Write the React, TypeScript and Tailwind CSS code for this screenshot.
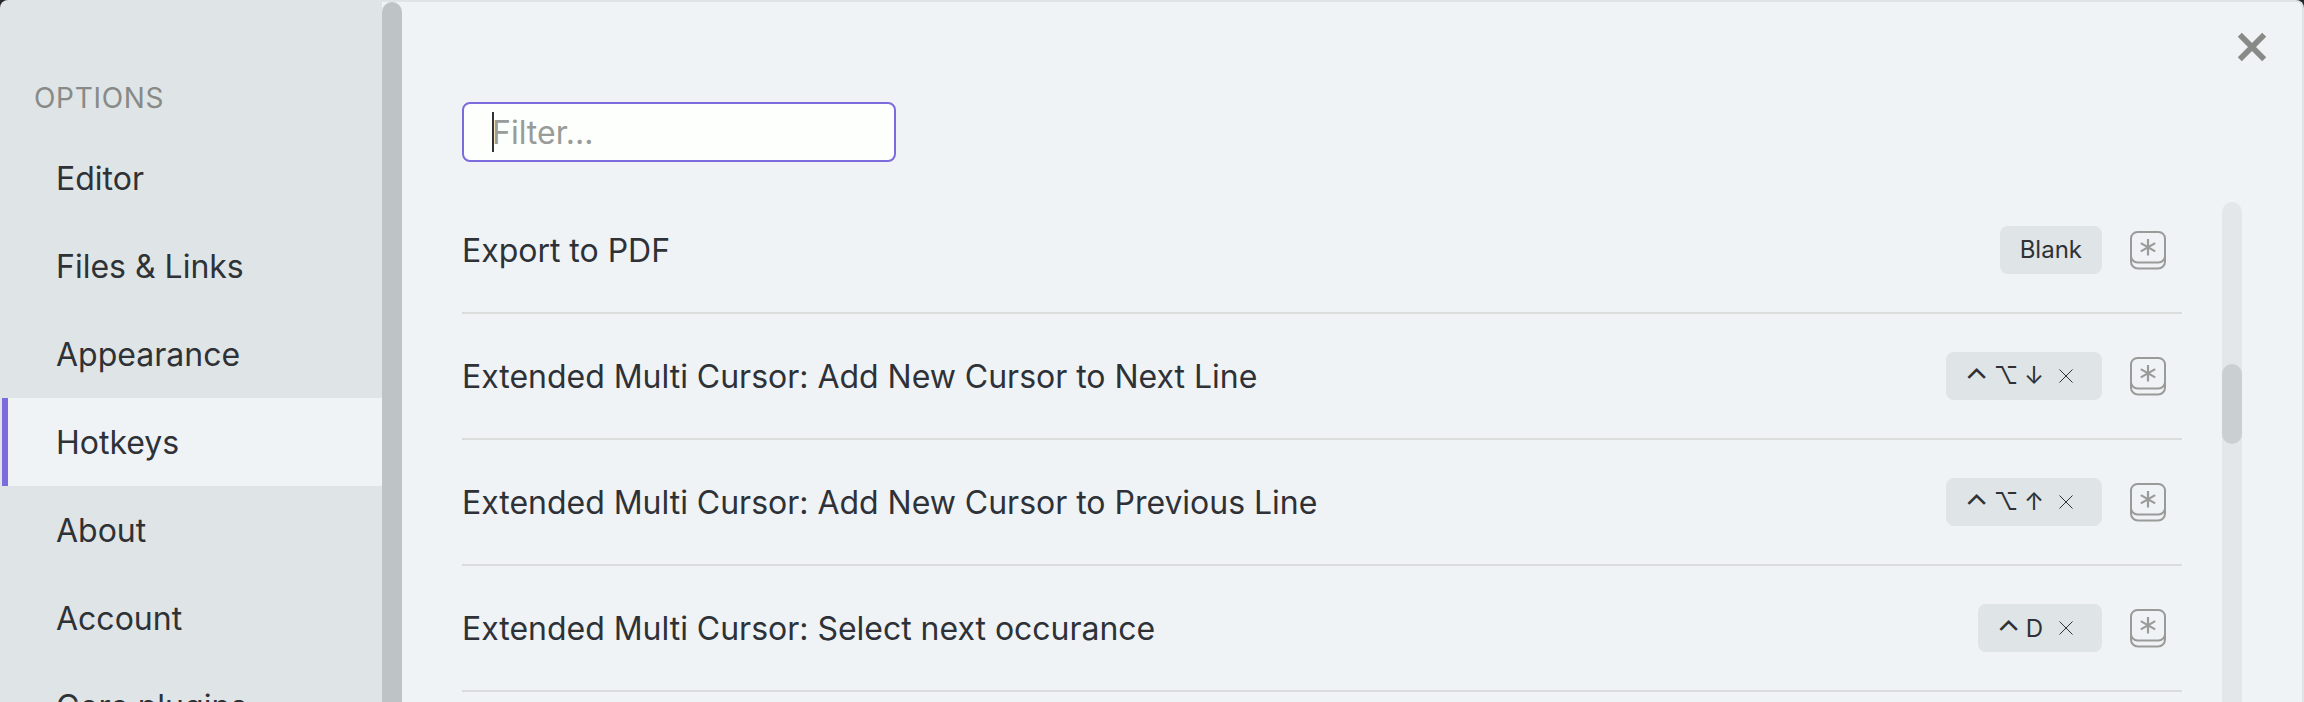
type Hotkey = { name: string; keys: string[] };

const tabs = ['Editor', 'Files & Links', 'Appearance', 'Hotkeys', 'About', 'Account', 'Core plugins'];

const hotkeys: Hotkey[] = [
  { name: 'Export to PDF', keys: [] },
  { name: 'Extended Multi Cursor: Add New Cursor to Next Line', keys: ['⌃', '⌥', '↓'] },
  { name: 'Extended Multi Cursor: Add New Cursor to Previous Line', keys: ['⌃', '⌥', '↑'] },
  { name: 'Extended Multi Cursor: Select next occurance', keys: ['⌃', 'D'] },
];

const keyStyles: Record<string, string> = {
  '⌃': 'w-[21px] text-[31px] pt-1.5',
  '⌥': 'w-[26px]',
  D: 'w-[18px] pl-px pt-0.5',
};

function KeyIcon() {
  return (
    <svg className="ml-7 mr-4 h-10 w-9 shrink-0" viewBox="0 0 36 40" fill="none" stroke="#999b98" strokeWidth="2">
      <rect x="1" y="2" width="34" height="30.4" rx="6.5" />
      <path d="M1 26v5.600a7 7 0 0 0 7 7h20a7 7 0 0 0 7-7V26" />
      <path d="M18 9v16.500M10.800 13.100l14.400 8.300M25.200 13.100l-14.400 8.300" strokeWidth="2.2" />
    </svg>
  );
}

function HotkeyRow({ name, keys }: Hotkey) {
  return (
    <div className="flex h-[126px] shrink-0 items-center border-b-2 border-[#dadddc]">
      <div className="grow pt-0.5 text-[32px] leading-10 tracking-[-0.02px]">{name}</div>
      <div className="flex h-12 items-center rounded-lg bg-[#dfe4e6] px-5 text-2xl leading-none">
        {keys.length === 0 && <span>Blank</span>}
        {keys.length > 0 && (
          <>
            <div className="flex items-center gap-1.5">
              {keys.map((key) => (
                <span key={key} className={`flex h-8 items-center justify-center ${keyStyles[key] ?? 'w-[18px]'}`}>
                  {key}
                </span>
              ))}
            </div>
            <svg className="ml-[15px] mr-2 size-4" viewBox="0 0 16 16" fill="none" stroke="#2e3338" strokeWidth="1">
              <path d="M1.500 1.500l13 13M14.500 1.500l-13 13" />
            </svg>
          </>
        )}
      </div>
      <KeyIcon />
    </div>
  );
}

export default function App() {
  return (
    <div className="h-[702px] w-[2304px] overflow-hidden bg-[#262626] font-['Inter',sans-serif] text-[#2e3236]">
      <div className="flex h-full overflow-hidden rounded-t-[8px] border-x-2 border-t-2 border-[#dfe4e6] bg-[#eff3f6]">
        <nav className="flex w-[380px] shrink-0 flex-col bg-[#dfe4e6] pt-[75px]">
          <div className="mb-[15px] h-[42px] pl-8 text-[28px] leading-[42px] tracking-[0.7px] text-[#888a87]">OPTIONS</div>
          {tabs.map((tab) => (
            <div
              key={tab}
              className={
                tab === 'Hotkeys'
                  ? 'flex h-[88px] shrink-0 items-center border-l-[6px] border-[#7c6bdc] bg-[#eff3f6] pl-12 pt-0.5 text-[32px]'
                  : 'flex h-[88px] shrink-0 items-center pl-[54px] pt-0.5 text-[32px]'
              }
            >
              {tab}
            </div>
          ))}
        </nav>
        <div className="w-5 shrink-0 rounded-t-full bg-[#bec3c6]" />
        <main className="flex grow flex-col pl-[60px]">
          <div className="flex h-[200px] justify-between">
            <div className="mt-[100px] flex h-[60px] w-[434px] items-center rounded-lg border-2 border-[#7c6bdc] bg-[#fdfffc] pl-7 text-[32px] text-[#999b98]">
              <span className="h-10 w-0.5 bg-[#2e3236]" />
              <span className="-ml-0.5 pt-0.5">Filter...</span>
            </div>
            <svg className="mr-[35px] mt-[30px] size-[30px]" viewBox="0 0 30 30" fill="none" stroke="#888a87" strokeWidth="5.7">
              <path d="M2.800 2.800l24.400 24.400M27.200 2.800L2.800 27.200" />
            </svg>
          </div>
          <div className="flex min-h-0 grow">
            <div className="-mt-3.5 flex w-[1720px] flex-col">
              {hotkeys.map((h) => (
                <HotkeyRow key={h.name} {...h} />
              ))}
            </div>
            <div className="ml-10 w-5 rounded-t-full bg-[#e3e7e9] pt-[162px]">
              <div className="h-20 rounded-full bg-[#cacfd2]" />
            </div>
          </div>
        </main>
      </div>
    </div>
  );
}
